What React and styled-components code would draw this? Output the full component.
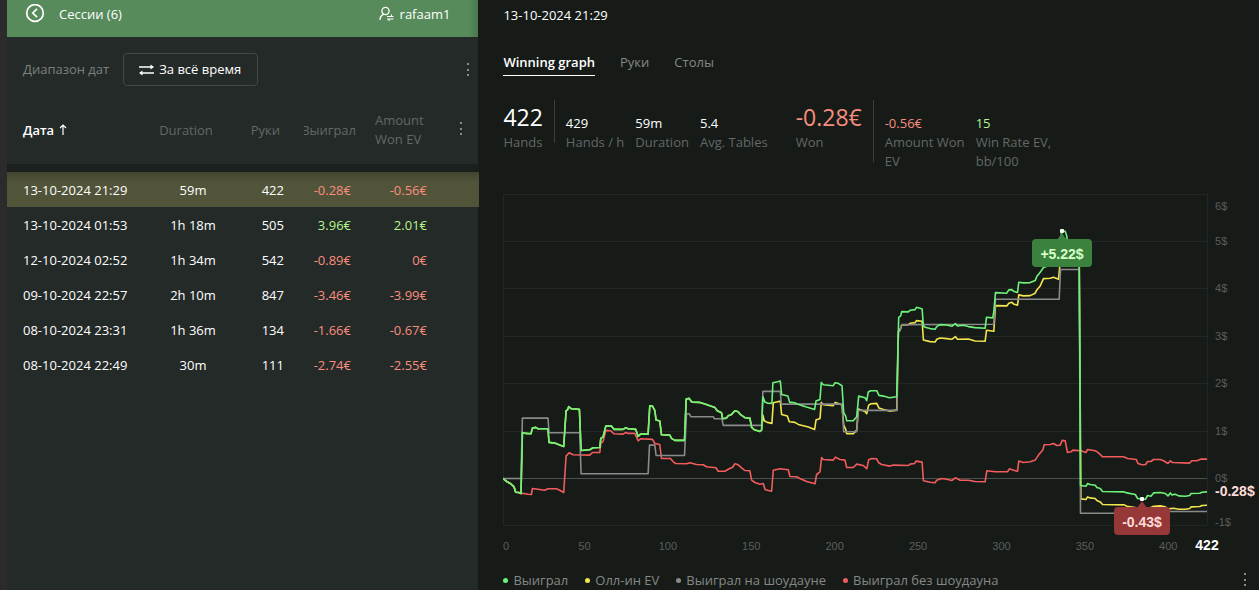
import React, {useLayoutEffect, useRef, useState} from "react";
import styled, {createGlobalStyle, css} from "styled-components";

const GlobalStyle = createGlobalStyle`
  * {
    box-sizing: border-box;
  }

  body {
    margin: 0;
    background: #161b18;
    color: #ffffff;
    font-family: "Open Sans", "Noto Sans", sans-serif;
    font-size: 13px;
    line-height: 19px;
  }

  button {
    margin: 0;
    padding: 0;
    border: none;
    background: none;
    color: inherit;
    font: inherit;
    cursor: pointer;
  }
`;

const colors = {
  won: "#6df27a",
  ev: "#f3e54d",
  showdown: "#8a8a8a",
  noShowdown: "#f25c5c",
  negative: "#f98d7d",
  positive: "#b5f58e",
  muted: "#636866"
};

const amountColor = (tone) => colors[tone] || "#ffffff";

const Page = styled.div`
  display: flex;
  min-height: 100vh;
`;

const Sidebar = styled.aside`
  flex: 0 0 38%;
  min-width: 0;
  border-left: 7px solid #2b2b2b;
  background: #242a28;
`;

const SidebarHeader = styled.header`
  display: flex;
  align-items: flex-start;
  justify-content: space-between;
  height: 37px;
  padding: 4px 28px 0 18px;
  background: linear-gradient(to left, #4a774f, #588b5b 10px);
  font-weight: 500;
`;

const HeaderButton = styled.button`
  display: flex;
  align-items: center;
  gap: ${(props) => props.$gap};
  height: 20px;

  svg {
    flex: none;
  }
`;

const FilterBar = styled.div`
  display: flex;
  align-items: center;
  gap: 14px;
  padding: 16px 4px 10px 16px;
`;

const FilterLabel = styled.label`
  color: #7c807e;
`;

const RangeButton = styled.button`
  display: flex;
  align-items: center;
  gap: 5px;
  height: 33px;
  padding: 0 16px 0 15px;
  border: 1px solid #434846;
  border-radius: 4px;
  font-weight: 500;
`;

const MoreButton = styled.button`
  display: inline-flex;
  align-items: center;
  justify-content: center;
  width: 12px;
  height: 20px;
  margin-left: ${(props) => (props.$push ? "auto" : "0")};
`;

const SessionTable = styled.table`
  width: 100%;
  table-layout: fixed;
  border-spacing: 0;
`;

const HeadCell = styled.th`
  height: 76px;
  padding: 0 ${(props) => props.$right || "0"} 0 ${(props) => props.$left || "0"};
  border-bottom: 8px solid #1b201e;
  overflow: hidden;
  color: ${colors.muted};
  font-weight: 400;
  text-align: ${(props) => props.$align || "left"};
`;

const ClippedLabel = styled.span`
  display: flex;
  justify-content: flex-end;
  overflow: hidden;
`;

const SortButton = styled.button`
  display: flex;
  align-items: center;
  gap: 5px;
  color: #ffffff;
  font-weight: 600;
`;

const SessionRow = styled.tr`
  ${(props) => props.$selected && css`
    background: linear-gradient(#42452f, #515439 10px);
  `}
`;

const Cell = styled.td`
  height: 35px;
  padding: 2px ${(props) => props.$right || "0"} 0 ${(props) => props.$left || "0"};
  color: ${(props) => amountColor(props.$tone)};
  font-weight: ${(props) => (props.$tone === "negative" ? 400 : 500)};
  text-align: ${(props) => props.$align || "left"};
  white-space: nowrap;
`;

const Main = styled.main`
  flex: 1;
  min-width: 0;
  padding: 6px 0 0 25px;
`;

const Title = styled.h1`
  margin: 0;
  font-size: 13px;
  font-weight: 500;
  line-height: 19px;
`;

const Tabs = styled.nav`
  display: flex;
  gap: 25px;
  margin-top: 28px;
`;

const Tab = styled.button`
  height: 23px;
  padding-bottom: 3px;
  border-bottom: 1px solid ${(props) => (props.$active ? "#ffffff" : "transparent")};
  color: ${(props) => (props.$active ? "#ffffff" : "#858886")};
  font-weight: ${(props) => (props.$active ? 600 : 500)};
  line-height: 19px;
`;

const Stats = styled.section`
  display: flex;
  align-items: flex-start;
  gap: 28px;
  margin-top: 24px;
`;

const StatGroup = styled.div`
  display: flex;
  gap: 11px;
`;

const Divider = styled.span`
  width: 1px;
  margin-bottom: 9px;
  background: #3b403e;
`;

const Stat = styled.div`
  max-width: 80px;
`;

const StatValue = styled.div`
  display: flex;
  align-items: flex-end;
  height: 33px;
  padding-bottom: ${(props) => (props.$large ? "3px" : "0")};
  color: ${(props) => amountColor(props.$tone)};
  font-size: ${(props) => (props.$large ? "23px" : "13px")};
  font-weight: ${(props) => (props.$large || props.$tone === "negative" ? 400 : 500)};
  line-height: ${(props) => (props.$large ? "26px" : "19px")};
`;

const StatCaption = styled.div`
  color: ${colors.muted};
`;

const ChartFrame = styled.div`
  margin-top: 19px;

  svg {
    display: block;
    width: 100%;
    font-family: "Liberation Sans", Arial, sans-serif;
  }
`;

const Axis = styled.g`
  fill: #5a5e5c;
  font-size: 11px;
`;

const StrongLabel = styled.text`
  fill: ${(props) => props.$color};
  font-size: 14px;
  font-weight: 700;
  text-anchor: ${(props) => props.$anchor};
`;

const Footer = styled.footer`
  display: flex;
  align-items: center;
  justify-content: space-between;
  padding: 0 8px 0 0;
  height: 20px;
`;

const Legend = styled.ul`
  display: flex;
  gap: 17px;
  margin: 0;
  padding: 0;
  color: #858886;
  list-style: none;
`;

const LegendItem = styled.li`
  display: flex;
  align-items: center;
  gap: 5px;

  &::before {
    content: "";
    width: 5px;
    height: 5px;
    border-radius: 50%;
    background: ${(props) => props.$color};
  }
`;

const BackIcon = () => (
  <svg width="20" height="20" viewBox="0 0 20 20" fill="none" stroke="#ffffff" strokeWidth="1.7">
    <circle cx="10" cy="9" r="8.3" />
    <path d="M12 4.8 7.8 9l4.2 4.2" />
  </svg>
);

const PlayerIcon = () => (
  <svg width="16" height="16" viewBox="0 0 16 16" fill="none" stroke="#ffffff" strokeWidth="1.3">
    <circle cx="6.5" cy="5" r="3.6" />
    <path d="M1 14c0-3 1.4-4.7 3.6-5.6" />
    <path d="M8 10.5h6.5M8 13h6.5M12.5 8.5v2M10 13v2" strokeWidth="1.1" />
  </svg>
);

const SwapIcon = () => (
  <svg width="15" height="12" viewBox="0 0 15 12" fill="none" stroke="#ffffff" strokeWidth="1.4">
    <path d="M0 3h14M1 9h14" />
    <path d="M11.5 .5 15 3l-3.5 2.5ZM3.5 6.5 0 9l3.5 2.5Z" fill="#ffffff" stroke="none" />
  </svg>
);

const SortIcon = () => (
  <svg width="8" height="12" viewBox="0 0 8 12" fill="none" stroke="#ffffff" strokeWidth="1.2">
    <path d="M4 11V1M1 4l3-3 3 3" />
  </svg>
);

const DotsIcon = () => (
  <svg width="4" height="14" viewBox="0 0 4 14" fill="#878b89">
    <rect x="1" y="0" width="2" height="2" />
    <rect x="1" y="6" width="2" height="2" />
    <rect x="1" y="11" width="2" height="2" />
  </svg>
);

const sessions = [
  {date: "13-10-2024 21:29", duration: "59m", hands: 422, won: "-0.28€", ev: "-0.56€"},
  {date: "13-10-2024 01:53", duration: "1h 18m", hands: 505, won: "3.96€", ev: "2.01€"},
  {date: "12-10-2024 02:52", duration: "1h 34m", hands: 542, won: "-0.89€", ev: "0€"},
  {date: "09-10-2024 22:57", duration: "2h 10m", hands: 847, won: "-3.46€", ev: "-3.99€"},
  {date: "08-10-2024 23:31", duration: "1h 36m", hands: 134, won: "-1.66€", ev: "-0.67€"},
  {date: "08-10-2024 22:49", duration: "30m", hands: 111, won: "-2.74€", ev: "-2.55€"}
];

// 0€ is shown in the same colour as a loss
const toneOf = (amount) => (parseFloat(amount) > 0 ? "positive" : "negative");

// Points are "x,y" pairs: 5 units of x to a hand, 142 units of y to a dollar
const UNITS_PER_HAND = 5;
const UNITS_PER_DOLLAR = 142;
const TOTAL_HANDS = 422;

const opening = "0,0 5,-4 10,-8 22,-15 28,-20 33,-25 38,-41 47,-42 54,-45";

const wonStart = `${opening} 58,138 68,135 84,134 88,151 98,153 105,149 135,149 138,108 155,106 170,100 182,96
  189,203 193,205 197,215 204,209 229,207 234,84 260,86 270,92 290,93 293,120 300,125 308,157 325,157 333,147 360,147
  368,152 375,149 398,147 405,126 412,133 435,133 440,218 448,217 455,203 459,175 470,172 475,131 500,130 505,120
  515,114 544,114 549,238 558,240 565,230 568,229 590,228 605,223 620,218 635,213 642,203 655,197 658,179 670,181
  675,188 685,192 695,203 705,200 712,191 725,182 740,181 745,153 752,147 770,141 775,145`;

const series = [
  {
    name: "Выиграл без шоудауна",
    color: colors.noShowdown,
    points: `${opening} 58,-44 75,-47 85,-48 88,-30 105,-32 125,-35 135,-31 160,-31 170,-35 182,-42 189,67 198,77
      210,71 260,70 268,78 290,78 293,105 300,111 308,144 323,143 333,134 360,133 368,138 375,135 395,135 402,120
      405,113 413,119 448,117 455,105 470,102 475,60 502,60 510,50 518,45 550,44 560,47 580,42 600,41 610,35 638,32
      645,22 665,22 675,28 688,34 695,44 705,41 715,32 725,24 740,23 745,-5 755,-12 770,-17 780,-15 786,-34 805,-38
      810,25 830,29 855,26 860,6 880,5 890,0 910,-9 935,-16 940,12 950,20 955,63 960,57 990,55 996,64 1010,57
      1025,55 1030,33 1050,33 1060,43 1080,39 1090,29 1096,56 1105,60 1120,59 1126,47 1135,42 1160,37 1170,40
      1215,39 1220,43 1233,45 1239,52 1256,49 1260,-7 1280,-11 1295,-13 1300,-5 1315,0 1330,-2 1345,-6 1356,2
      1370,-5 1395,-5 1415,-9 1445,-10 1450,23 1475,20 1512,20 1518,29 1530,25 1542,22 1546,52 1560,48 1580,50
      1595,55 1605,70 1618,85 1622,101 1640,102 1650,105 1660,99 1670,100 1676,114 1685,113 1692,78 1702,80
      1708,85 1732,83 1747,78 1752,87 1775,83 1782,79 1790,72 1797,65 1860,65 1872,60 1898,57 1903,45 1915,41
      1926,42 1932,51 1942,51 1950,57 1970,57 1980,53 1993,45 2000,53 2007,48 2058,46 2064,53 2080,53 2092,58
      2110,58`
  },
  {
    name: "Олл-ин EV",
    color: colors.ev,
    points: `${wonStart} 779,190 783,173 792,168 806,165 810,227 823,230 831,232 835,192 852,187 858,170 875,168
      885,162 900,158 915,154 934,147 938,175 950,180 954,228 960,221 990,218 996,228 1005,225 1016,220 1021,160
      1027,147 1030,134 1050,134 1060,145 1065,208 1085,201 1090,194 1096,220 1103,224 1120,225 1127,211 1140,207
      1158,202 1180,205 1185,440 1192,450 1195,460 1215,461 1220,465 1235,467 1239,473 1256,471 1260,415 1280,410
      1295,409 1300,417 1310,421 1330,419 1345,417 1356,425 1362,417 1395,418 1415,412 1445,411 1449,444 1471,441
      1476,518 1510,517 1516,525 1525,528 1530,523 1542,519 1546,550 1560,547 1580,548 1595,555 1600,565 1610,577
      1620,599 1640,600 1650,603 1665,597 1669,640 1675,702 1690,700 1692,660 1727,658 1732,-61 1747,-63 1752,-55
      1760,-58 1775,-60 1780,-66 1790,-70 1797,-78 1862,-79 1870,-83 1895,-87 1902,-99 1926,-101 1932,-91 1950,-83
      1970,-82 1985,-85 1993,-91 2010,-89 2025,-92 2045,-92 2058,-90 2062,-85 2088,-84 2095,-81 2110,-80`
  },
  {
    name: "Выиграл на шоудауне",
    color: colors.showdown,
    points: `0,0 54,0 58,181 135,181 138,137 230,137 234,14 435,14 439,100 455,100 459,69 544,69 550,194 558,194
      563,185 630,185 634,179 656,179 660,159 775,159 779,261 831,261 834,223 1016,223 1021,140 1060,140 1065,204
      1181,204 1185,440 1190,442 1195,461 1471,462 1476,537 1667,537 1671,626 1727,626 1731,-104 1880,-104
      1884,-99 2110,-99`
  },
  {
    name: "Выиграл",
    color: colors.won,
    points: `${wonStart} 779,245 785,229 792,226 806,225 809,287 823,290 831,292 835,252 854,247 859,229 875,227
      882,223 895,219 910,214 934,207 938,232 950,237 954,288 960,281 990,278 995,287 1005,285 1016,278 1021,197
      1027,187 1030,173 1050,173 1060,185 1066,247 1085,242 1090,233 1095,259 1102,263 1120,263 1127,249 1140,247
      1158,242 1180,245 1186,483 1192,487 1195,500 1215,499 1220,504 1235,506 1239,513 1250,510 1256,508 1260,457
      1265,453 1280,449 1295,447 1300,455 1310,461 1330,460 1345,456 1356,464 1362,457 1380,459 1395,455 1415,452
      1445,450 1449,483 1468,481 1471,500 1476,557 1510,555 1516,565 1525,566 1530,561 1542,557 1546,588 1560,586
      1580,587 1595,593 1600,605 1610,618 1620,632 1640,640 1665,637 1669,700 1675,742 1685,741 1690,725 1692,700
      1727,698 1731,-21 1747,-23 1752,-15 1760,-18 1775,-20 1780,-27 1790,-30 1797,-39 1862,-40 1870,-43 1895,-48
      1902,-60 1916,-62 1926,-62 1932,-51 1942,-53 1950,-43 1970,-42 1985,-45 1993,-52 2000,-43 2005,-49 2015,-47
      2025,-52 2045,-53 2058,-51 2062,-45 2088,-44 2095,-41 2110,-40`
  }
];

const legend = [series[3], series[1], series[2], series[0]];

const Flag = ({x, y, width, fill, color, children}) => (
  <g>
    <path d={`M${x - 5} ${y + 9}L${x} ${y + 2}L${x + 5} ${y + 9}Z`} fill={fill} />
    <rect x={x - width / 2} y={y + 8} width={width} height="28" rx="4" fill={fill} />
    <rect x={x - 2} y={y - 2} width="4" height="4" rx="1" fill="#ffffff" />
    <StrongLabel x={x} y={y + 28} $color={color} $anchor="middle">{children}</StrongLabel>
  </g>
);

const WinningChart = () => {
  const frame = useRef(null);
  const [width, setWidth] = useState(756);

  useLayoutEffect(() => {
    const measure = () => setWidth(frame.current.clientWidth);
    measure();
    window.addEventListener("resize", measure);
    return () => window.removeEventListener("resize", measure);
  }, []);

  const top = 4;
  const zero = 288;
  const right = width - 52;
  const xAt = (hand) => (hand / TOTAL_HANDS) * right;
  const yAt = (dollars) => zero - dollars * 47.4;

  const pathOf = (points) => "M" + points.trim().split(/\s+/).map((pair) => {
    const [x, y] = pair.split(",").map(Number);
    return `${xAt(x / UNITS_PER_HAND).toFixed(1)} ${(yAt(y / UNITS_PER_DOLLAR) + 0.5).toFixed(1)}`;
  }).join("L");

  return (
    <ChartFrame ref={frame}>
      <svg height="380" role="img" aria-label="Winning graph">
        <g stroke="#222725" shapeRendering="crispEdges">
          {[6, 5, 4, 3, 2, 1, -1].map((value) => (
            <line key={value} x1="0" x2={right} y1={Math.round(yAt(value)) + 0.5} y2={Math.round(yAt(value)) + 0.5} />
          ))}
          <line x1="0.5" x2="0.5" y1={top} y2={yAt(-1)} />
          <line x1={right + 0.5} x2={right + 0.5} y1={top} y2={yAt(-1)} />
          <line x1="0" x2={right} y1={zero + 0.5} y2={zero + 0.5} stroke="#4a4e4c" />
        </g>
        <Axis>
          {/* The outer two labels are kept inside the plot */}
          {[6, 5, 4, 3, 2, 1, 0, -1].map((value) => (
            <text key={value} x={right + 8} y={Math.min(Math.max(yAt(value), 16), 332) + 4}>{value}$</text>
          ))}
          <text x="0" y="360">0</text>
          {[50, 100, 150, 200, 250, 300, 350, 400].map((hand) => (
            <text key={hand} x={xAt(hand) - 2} y="360" textAnchor="middle">{hand}</text>
          ))}
        </Axis>
        <g fill="none" strokeWidth="1.6" strokeLinejoin="round">
          {series.map((line) => <path key={line.name} d={pathOf(line.points)} stroke={line.color} />)}
        </g>
        <Flag x={Math.round(xAt(335))} y={41} width={60} fill="#3b823f" color="#d9ffc7">+5.22$</Flag>
        <Flag x={Math.round(xAt(383))} y={309} width={56} fill="#963838" color="#ffdcd8">-0.43$</Flag>
        <StrongLabel x={right + 8} y="306" $color="#ffdcd8" $anchor="start">-0.28$</StrongLabel>
        <StrongLabel x={right} y="360" $color="#ffffff" $anchor="middle">422</StrongLabel>
      </svg>
    </ChartFrame>
  );
};

const DisplayStat = ({value, caption, large, tone}) => (
  <Stat>
    <StatValue $large={large} $tone={tone}>{value}</StatValue>
    <StatCaption>{caption}</StatCaption>
  </Stat>
);

const SessionsPanel = () => {
  const [selected, setSelected] = useState(0);

  return (
    <Sidebar>
      <SidebarHeader>
        <HeaderButton $gap="14px"><BackIcon />Сессии (6)</HeaderButton>
        <HeaderButton $gap="5px"><PlayerIcon />rafaam1</HeaderButton>
      </SidebarHeader>
      <FilterBar>
        <FilterLabel htmlFor="date-range">Диапазон дат</FilterLabel>
        <RangeButton id="date-range"><SwapIcon />За всё время</RangeButton>
        <MoreButton $push aria-label="Фильтры"><DotsIcon /></MoreButton>
      </FilterBar>
      <SessionTable>
        <colgroup>
          <col width="141" />
          <col width="90" />
          <col width="66" />
          <col width="63" />
          <col width="76" />
          <col width="36" />
        </colgroup>
        <thead>
          <tr>
            <HeadCell $left="16px"><SortButton>Дата <SortIcon /></SortButton></HeadCell>
            <HeadCell $align="center" $right="14px">Duration</HeadCell>
            <HeadCell $align="right" $right="24px">Руки</HeadCell>
            <HeadCell $right="11px"><ClippedLabel>Выиграл</ClippedLabel></HeadCell>
            <HeadCell $left="8px" $right="16px">Amount Won EV</HeadCell>
            <HeadCell $align="center"><MoreButton aria-label="Столбцы"><DotsIcon /></MoreButton></HeadCell>
          </tr>
        </thead>
        <tbody>
          {sessions.map((session, index) => (
            <SessionRow key={session.date} $selected={index === selected} onClick={() => setSelected(index)}>
              <Cell $left="16px">{session.date}</Cell>
              <Cell $align="center">{session.duration}</Cell>
              <Cell $align="right" $right="20px">{session.hands}</Cell>
              <Cell $align="right" $right="16px" $tone={toneOf(session.won)}>{session.won}</Cell>
              <Cell $align="right" $right="16px" $tone={toneOf(session.ev)}>{session.ev}</Cell>
              <Cell />
            </SessionRow>
          ))}
        </tbody>
      </SessionTable>
    </Sidebar>
  );
};

const App = () => {
  const [tab, setTab] = useState("Winning graph");

  return (
    <>
      <GlobalStyle />
      <Page>
        <SessionsPanel />
        <Main>
          <Title>13-10-2024 21:29</Title>
          <Tabs>
            {["Winning graph", "Руки", "Столы"].map((name) => (
              <Tab key={name} $active={name === tab} onClick={() => setTab(name)}>{name}</Tab>
            ))}
          </Tabs>
          <Stats>
            <StatGroup>
              <DisplayStat large value="422" caption="Hands" />
              <Divider />
              <DisplayStat value="429" caption="Hands / h" />
              <DisplayStat value="59m" caption="Duration" />
              <DisplayStat value="5.4" caption="Avg. Tables" />
            </StatGroup>
            <StatGroup>
              <DisplayStat large tone="negative" value="-0.28€" caption="Won" />
              <Divider />
              <DisplayStat tone="negative" value="-0.56€" caption="Amount Won EV" />
              <DisplayStat tone="positive" value="15" caption="Win Rate EV, bb/100" />
            </StatGroup>
          </Stats>
          <WinningChart />
          <Footer>
            <Legend>
              {legend.map((line) => <LegendItem key={line.name} $color={line.color}>{line.name}</LegendItem>)}
            </Legend>
            <MoreButton aria-label="Настройки графика"><DotsIcon /></MoreButton>
          </Footer>
        </Main>
      </Page>
    </>
  );
};

export default App;
